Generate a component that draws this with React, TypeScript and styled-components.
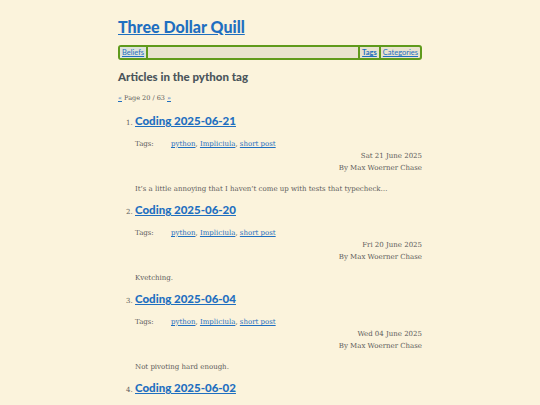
import styled, { createGlobalStyle } from 'styled-components'

const colors = {
  page: '#fbf3dc',
  link: '#1f6fc0',
  heading: '#4a555b',
  text: '#5b5b5b',
  green: '#5f9a1c',
  navBg: '#e9e3cf',
}

const GlobalStyle = createGlobalStyle`
  html, body {
    margin: 0;
    padding: 0;
    background: ${colors.page};
  }
  body {
    font-family: "DejaVu Serif", serif;
    color: ${colors.text};
  }
`

const Page = styled.div`
  width: 304px;
  margin: 0 auto;
  padding-top: 16px;
`

const SiteTitle = styled.h1`
  margin: 0 0 8px;
  font-family: Lato, sans-serif;
  font-size: 16px;
  font-weight: 900;
  line-height: 21px;

  a {
    color: ${colors.link};
  }
`

const Nav = styled.nav`
  display: flex;
  align-items: stretch;
  border: 2px solid ${colors.green};
  border-radius: 3px;
  background: ${colors.navBg};
  height: 11px;
  font-family: Lato, sans-serif;
  font-size: 7.5px;
  line-height: 11px;
`

const NavItem = styled.a<{ $bold?: boolean; $tint?: boolean }>`
  color: ${colors.link};
  padding: 0 2px;
  font-weight: ${({ $bold }) => ($bold ? 700 : 400)};
  background: ${({ $tint }) => ($tint ? '#dde3dc' : 'transparent')};
`

const NavSep = styled.span`
  width: 2px;
  background: ${colors.green};
`

const NavSpacer = styled.div`
  flex: 1;
`

const SectionTitle = styled.h2`
  margin: 9px 0 0;
  font-family: Lato, sans-serif;
  font-size: 11.5px;
  font-weight: 900;
  color: ${colors.heading};
  line-height: 16px;
`

const Pager = styled.p`
  margin: 8px 0 0;
  font-size: 6.5px;
  line-height: 10px;

  a {
    color: ${colors.link};
  }
`

const Articles = styled.ol`
  margin: 8px 0 0;
  padding-left: 17px;
`

const Article = styled.li`
  font-size: 7px;
  margin-bottom: 5px;

  &::marker {
    color: ${colors.text};
  }
`

const ArticleTitle = styled.h3`
  display: inline;
  font-family: Lato, sans-serif;
  font-size: 11.5px;
  font-weight: 900;
  line-height: 20px;

  a {
    color: ${colors.link};
  }
`

const TagRow = styled.div`
  display: flex;
  margin-top: 8px;
  line-height: 10px;
`

const TagLabel = styled.span`
  width: 36px;
`

const TagLink = styled.a`
  color: ${colors.link};
`

const Meta = styled.div`
  text-align: right;
  line-height: 12px;
  margin-top: 1px;
`

const Excerpt = styled.p`
  margin: 9px 0 0;
  line-height: 12px;
`

const articles = [
  {
    title: 'Coding 2025-06-21',
    date: 'Sat 21 June 2025',
    excerpt: "It\u2019s a little annoying that I haven\u2019t come up with tests that typecheck\u2026",
  },
  { title: 'Coding 2025-06-20', date: 'Fri 20 June 2025', excerpt: 'Kvetching.' },
  { title: 'Coding 2025-06-04', date: 'Wed 04 June 2025', excerpt: 'Not pivoting hard enough.' },
  { title: 'Coding 2025-06-02', date: 'Mon 02 June 2025', excerpt: 'Some progress.' },
]

const tags = ['python', 'Impliciula', 'short post']

export default function App() {
  return (
    <>
      <GlobalStyle />
      <Page>
        <SiteTitle>
          <a href="#">Three Dollar Quill</a>
        </SiteTitle>
        <Nav>
          <NavItem href="#" $tint>
            Beliefs
          </NavItem>
          <NavSep />
          <NavSpacer />
          <NavSep />
          <NavItem href="#" $bold>
            Tags
          </NavItem>
          <NavSep />
          <NavItem href="#">Categories</NavItem>
        </Nav>
        <SectionTitle>Articles in the python tag</SectionTitle>
        <Pager>
          <a href="#">&laquo;</a> Page 20 / 63 <a href="#">&raquo;</a>
        </Pager>
        <Articles>
          {articles.map((a) => (
            <Article key={a.title}>
              <ArticleTitle>
                <a href="#">{a.title}</a>
              </ArticleTitle>
              <TagRow>
                <TagLabel>Tags:</TagLabel>
                <span>
                  {tags.map((t, i) => (
                    <span key={t}>
                      <TagLink href="#">{t}</TagLink>
                      {i < tags.length - 1 ? ', ' : ''}
                    </span>
                  ))}
                </span>
              </TagRow>
              <Meta>
                {a.date}
                <br />
                By Max Woerner Chase
              </Meta>
              <Excerpt>{a.excerpt}</Excerpt>
            </Article>
          ))}
        </Articles>
      </Page>
    </>
  )
}
